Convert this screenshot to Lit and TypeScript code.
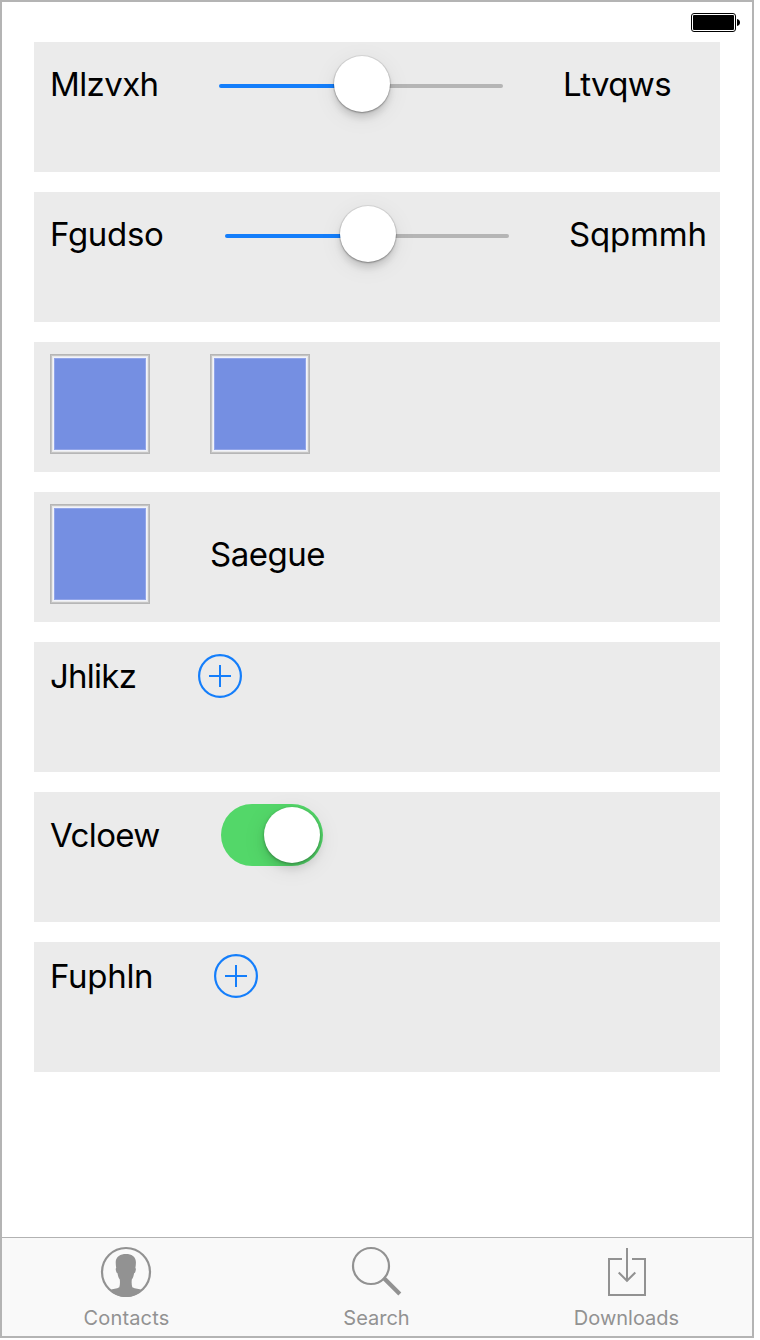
import { LitElement, html, css, svg } from "lit";
import { customElement, property } from "lit/decorators.js";
import { styleMap } from "lit/directives/style-map.js";

@customElement("ui-label")
class UiLabel extends LitElement {
  @property() text = "";
  @property({ type: Number }) width = 0;
  @property({ type: Number }) spacing = 0;
  static styles = css`
    :host { display: block; flex: none; }
    .text { font-size: 33px; line-height: 41px; white-space: nowrap; color: #000; }
  `;
  render() {
    return html`<div class="text" style=${styleMap({ width: `${this.width}px`, letterSpacing: `${this.spacing}px` })}>${this.text}</div>`;
  }
}

@customElement("ui-slider")
class UiSlider extends LitElement {
  static styles = css`
    :host { display: flex; align-items: center; flex: none; width: 284px; height: 60px; }
    .track { width: 141px; height: 4px; margin-top: 4px; background: #b5b5b5; border-radius: 0 2px 2px 0; }
    .fill { width: 143px; background: #147efb; border-radius: 2px 0 0 2px; }
    .knob {
      flex: none; width: 56px; height: 56px; margin: 0 -28px; border-radius: 50%; background: #fff; z-index: 1;
      box-shadow: 0 0 0 1px rgba(0, 0, 0, 0.07), 0 1px 2px rgba(0, 0, 0, 0.3), 0 6px 7px rgba(0, 0, 0, 0.13), 0 5px 24px rgba(0, 0, 0, 0.07);
    }
  `;
  render() {
    return html`<div class="track fill"></div><div class="knob"></div><div class="track"></div>`;
  }
}

@customElement("ui-switch")
class UiSwitch extends LitElement {
  static styles = css`
    :host { display: flex; align-items: center; justify-content: flex-end; flex: none; box-sizing: border-box;
      width: 102px; height: 62px; padding-right: 3px; border-radius: 31px; background: #53d769; }
    .knob { width: 56px; height: 56px; border-radius: 50%; background: #fff;
      box-shadow: 0 1px 3px rgba(0, 0, 0, 0.3), 0 6px 8px rgba(0, 0, 0, 0.1), 0 5px 24px rgba(0, 0, 0, 0.09); }
  `;
  render() {
    return html`<div class="knob"></div>`;
  }
}

@customElement("ui-swatch")
class UiSwatch extends LitElement {
  static styles = css`
    :host { display: block; flex: none; width: 100px; height: 100px; }
    svg { display: block; }
  `;
  render() {
    return html`<svg width="100" height="100" viewBox="0 0 100 100">
      <rect width="100" height="100" fill="#b6b6b6" />
      <rect x="1" y="1" width="98" height="98" fill="#c4c4c4" />
      <rect x="2" y="2" width="96" height="96" fill="#e9e9e9" />
      <rect x="3" y="3" width="94" height="94" fill="#f1f3fc" />
      <rect x="4" y="4" width="92" height="92" fill="#91a4e8" />
      <rect x="5" y="5" width="90" height="90" fill="#758fe2" />
    </svg>`;
  }
}

@customElement("ui-add")
class UiAdd extends LitElement {
  static styles = css`
    :host { display: block; flex: none; width: 44px; height: 44px; }
    svg { display: block; }
  `;
  render() {
    return html`<svg width="44" height="44" viewBox="0 0 44 44" fill="none" stroke="#147efb" stroke-width="2">
      <circle cx="22" cy="22" r="20.900" stroke-width="2.200" />
      <path d="M22 11v22M11 22h22" />
    </svg>`;
  }
}

const icons = {
  contacts: svg`
    <circle cx="26" cy="26" r="24" fill="none" stroke="#929292" stroke-width="2.200" />
    <path fill="#929292" d="M26 8c-5.500 0-10 2.500-10.300 8 0 2 .2 4 .5 6-.8.500-.5 2 0 3.500.3 1 .7 1.700 1.300 1.700.4 2.500 1 4.500 2.300 6.300.3 3 .2 5.500-.5 7.800C17 43 12.500 42.800 10 44.200 14 48.500 20 51 26 51s12-2.500 16-6.800C39.500 42.800 35 43 32.300 41.300c-.7-2.300-.8-4.800-.5-7.800 1.300-1.800 1.900-3.800 2.300-6.300.7 0 1-.7 1.300-1.700.5-1.500.8-3 0-3.500.3-2 .6-4 .5-6C35.700 10.500 31.500 8 26 8z" />`,
  search: svg`
    <circle cx="21" cy="20" r="18" fill="none" stroke="#929292" stroke-width="2.200" />
    <path fill="none" stroke="#929292" stroke-width="4.200" d="M33.500 31.800L49.800 48.100" />`,
  downloads: svg`
    <path fill="none" stroke="#929292" stroke-width="2" d="M22 13H9v36h36V13H32M27 2v33M18.700 26.500L27 34.800l8.300-8.300" />`,
};

@customElement("app-root")
class AppRoot extends LitElement {
  static styles = css`
    :host { display: block; background: #fff; width: 760px; height: 1340px; font-family: Inter, "Liberation Sans", sans-serif; }
    .frame { box-sizing: border-box; width: 754px; height: 1338px; border: 2px solid #b4b4b4; display: flex; flex-direction: column; background: #fff; }
    .status { flex: none; height: 40px; display: flex; justify-content: flex-end; box-sizing: border-box; padding: 11px 11px 0 0; }
    .status svg { display: block; }
    .rows { flex: 1; display: flex; flex-direction: column; gap: 20px; padding: 0 32px; }
    .row { flex: none; box-sizing: border-box; height: 130px; padding: 12px 0 0 16px; background: #ebebeb; }
    .items { display: flex; align-items: center; gap: 60px; }
    .tabs { flex: none; box-sizing: border-box; height: 99px; border-top: 1px solid #b2b2b2; background: #f9f9f9; display: flex; }
    .tab { width: 248px; padding: 8px 2px 0 0; display: flex; flex-direction: column; align-items: center; color: #929292; font-size: 20px; line-height: 24px; }
    .tab svg { display: block; margin-bottom: 8px; }
    .name { margin-left: 1px; white-space: nowrap; }
  `;

  label(text: string, width: number, spacing: number) {
    return html`<ui-label .text=${text} .width=${width} .spacing=${spacing}></ui-label>`;
  }

  row(content: unknown) {
    return html`<div class="row"><div class="items">${content}</div></div>`;
  }

  tab(name: string, icon: unknown, spacing: number) {
    return html`<div class="tab">
      <svg width="52" height="52" viewBox="0 0 52 52">${icon}</svg>
      <span class="name" style=${styleMap({ letterSpacing: `${spacing}px` })}>${name}</span>
    </div>`;
  }

  render() {
    return html`<div class="frame">
      <div class="status">
        <svg width="50" height="20" viewBox="0 0 50 20">
          <rect x="0.500" y="0.500" width="44" height="18" rx="2.500" fill="#fff" stroke="#000" />
          <rect x="2" y="2" width="41" height="15" rx="1" fill="#000" />
          <path d="M46 6c2 .5 3 1.500 3 3.500s-1 3-3 3.500z" fill="#000" />
        </svg>
      </div>
      <div class="rows">
        ${this.row(html`${this.label("Mlzvxh", 109, -0.6)}<ui-slider></ui-slider>${this.label("Ltvqws", 108, -0.65)}`)}
        ${this.row(html`${this.label("Fgudso", 115, -0.3)}<ui-slider></ui-slider>${this.label("Sqpmmh", 138, -0.2)}`)}
        ${this.row(html`<ui-swatch></ui-swatch><ui-swatch></ui-swatch>`)}
        ${this.row(html`<ui-swatch></ui-swatch>${this.label("Saegue", 115, -0.5)}`)}
        ${this.row(html`${this.label("Jhlikz", 88, -0.75)}<ui-add></ui-add>`)}
        ${this.row(html`${this.label("Vcloew", 111, -0.6)}<ui-switch></ui-switch>`)}
        ${this.row(html`${this.label("Fuphln", 104, -0.3)}<ui-add></ui-add>`)}
      </div>
      <div class="tabs">
        ${this.tab("Contacts", icons.contacts, 0.15)}
        ${this.tab("Search", icons.search, 0)}
        ${this.tab("Downloads", icons.downloads, 0)}
      </div>
    </div>`;
  }
}
